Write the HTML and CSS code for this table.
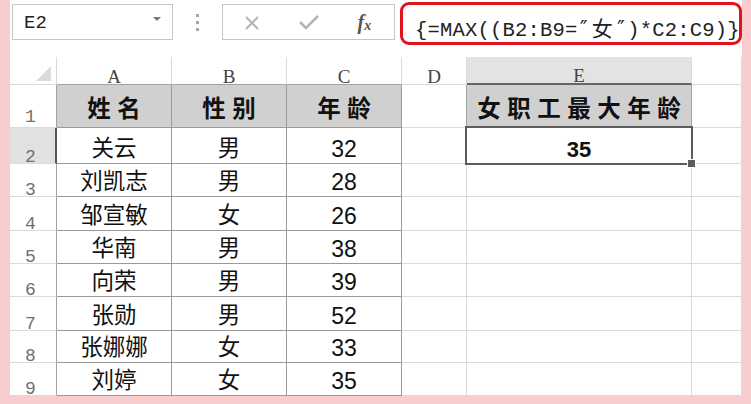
FILE: index.html
```html
<!DOCTYPE html>
<html lang="zh-CN">
<head>
<meta charset="utf-8">
<title>Excel</title>
<link rel="stylesheet" href="styles.css">
</head>
<body>
<div class="frame">
  <div class="toolbar">
    <div class="namebox"><span class="nb-text">E2</span><span class="nb-arrow"></span></div>
    <div class="dots"><i></i><i></i><i></i></div>
    <div class="fbtns">
      <svg class="ic-x" width="16" height="14" viewBox="0 0 16 14"><path d="M2 1 L14 13 M14 1 L2 13" stroke="#b4b4b4" stroke-width="2" fill="none"/></svg>
      <svg class="ic-ok" width="22" height="16" viewBox="0 0 22 16"><path d="M2 8 L8 14 L20 2" stroke="#b4b4b4" stroke-width="2.6" fill="none"/></svg>
      <span class="fx">f<sub>x</sub></span>
    </div>
    <div class="formula">{=MAX((B2:B9=<span class="q">″</span><span class="cjk">女</span><span class="q">″</span>)*C2:C9)}</div>
  </div>
  <div class="sheet">
    <div class="corner"><span class="tri"></span></div>
    <div class="ch tb">A</div><div class="ch tb">B</div><div class="ch tb">C</div><div class="ch">D</div><div class="ch sel">E</div><div class="ch"></div>

    <div class="rh tl r1">1</div>
    <div class="c t h"><span class="hd">姓名</span></div><div class="c t h"><span class="hd">性别</span></div><div class="c t h"><span class="hd">年龄</span></div>
    <div class="c d1"></div><div class="c e1 h"><span class="hd">女职工最大年龄</span></div><div class="c"></div>

    <div class="rh rsel">2</div>
    <div class="c t">关云</div><div class="c t">男</div><div class="c t n">32</div>
    <div class="c"></div><div class="c e2"><b>35</b></div><div class="c"></div>

    <div class="rh tl">3</div>
    <div class="c t">刘凯志</div><div class="c t">男</div><div class="c t n">28</div>
    <div class="c"></div><div class="c"></div><div class="c"></div>

    <div class="rh tl">4</div>
    <div class="c t">邹宣敏</div><div class="c t">女</div><div class="c t n">26</div>
    <div class="c"></div><div class="c"></div><div class="c"></div>

    <div class="rh tl">5</div>
    <div class="c t">华南</div><div class="c t">男</div><div class="c t n">38</div>
    <div class="c"></div><div class="c"></div><div class="c"></div>

    <div class="rh tl">6</div>
    <div class="c t">向荣</div><div class="c t">男</div><div class="c t n">39</div>
    <div class="c"></div><div class="c"></div><div class="c"></div>

    <div class="rh tl">7</div>
    <div class="c t">张勋</div><div class="c t">男</div><div class="c t n">52</div>
    <div class="c"></div><div class="c"></div><div class="c"></div>

    <div class="rh tl">8</div>
    <div class="c t">张娜娜</div><div class="c t">女</div><div class="c t n">33</div>
    <div class="c"></div><div class="c"></div><div class="c"></div>

    <div class="rh tl">9</div>
    <div class="c t">刘婷</div><div class="c t">女</div><div class="c t n">35</div>
    <div class="c"></div><div class="c"></div><div class="c"></div>
  </div>
</div>
</body>
</html>
```

FILE: styles.css
```css
* { box-sizing: border-box; }
html, body { margin: 0; padding: 0; }
body {
  background: #f9cdcd;
  width: 751px;
  height: 404px;
  overflow: hidden;
  font-family: "Noto Sans CJK SC", sans-serif;
  color: #111;
}
.frame {
  margin-left: 10px;
  width: 732px;
  height: 395px;
  background: #fff;
}
.toolbar {
  height: 57px;
  display: flex;
  align-items: flex-start;
}
.namebox {
  margin: 4px 0 0 2px;
  width: 161px;
  height: 36px;
  border: 1px solid #c6c6c6;
  display: flex;
  align-items: center;
  justify-content: space-between;
  padding: 0 11px 0 11px;
}
.nb-text {
  font-family: "Liberation Mono", monospace;
  font-size: 19px;
  color: #222;
  padding-top: 2px;
}
.nb-arrow {
  width: 0; height: 0;
  border-left: 4px solid transparent;
  border-right: 4px solid transparent;
  border-top: 4px solid #777;
  margin-top: -6px;
}
.dots {
  margin: 14px 0 0 23px;
  width: 3px;
  display: flex;
  flex-direction: column;
  gap: 4px;
}
.dots i {
  display: block;
  width: 3px; height: 3px;
  background: #a8a8a8;
}
.fbtns {
  margin: 4px 0 0 23px;
  width: 174px;
  height: 36px;
  border: 1px solid #c6c6c6;
  display: flex;
  align-items: center;
  padding-left: 21px;
}
.ic-x { margin-top: 2px; }
.ic-ok { margin-left: 38px; }
.fx {
  margin-left: 38px;
  font-family: "Liberation Serif", serif;
  font-style: italic;
  font-weight: bold;
  font-size: 20px;
  color: #555;
}
.fx sub { font-size: 14px; vertical-align: -1px; }
.formula {
  margin: 2px 0 0 5px;
  width: 342px;
  height: 43px;
  flex: none;
  border: 3px solid #e0141c;
  border-radius: 9px;
  font-family: "Liberation Mono", monospace;
  font-size: 20.5px;
  color: #222;
  padding: 7px 0 0 12px;
  white-space: nowrap;
  background: #fff;
  letter-spacing: 0.2px;
}
.formula .cjk {
  font-family: "Noto Sans CJK SC", sans-serif;
  display: inline-block;
  width: 24.6px;
  text-align: center;
  font-size: 21px;
}
.formula .q { font-family: "DejaVu Sans Mono", monospace; }

.sheet {
  display: grid;
  grid-template-columns: 47px 115px 115px 115px 65px 225px 50px;
  grid-template-rows: 28px 43px 36px 33px 34px 33px 33px 34px 32px 33px;
}
.sheet > div {
  border-right: 1px solid #dadada;
  border-bottom: 1px solid #dadada;
  display: flex;
  align-items: flex-end;
  justify-content: center;
}
.corner { position: relative; }
.tri {
  position: absolute;
  right: 5px; bottom: 3px;
  width: 0; height: 0;
  border-left: 15px solid transparent;
  border-bottom: 15px solid #dcdcdc;
}
.ch {
  font-family: "Liberation Serif", serif;
  font-size: 19px;
  line-height: 14px;
  color: #444;
  padding-bottom: 0;
}
.sheet > .ch.tb { border-bottom-color: #a3a3a3; }
.sheet > .ch.sel {
  background: #e3e3e3;
  border-bottom: 2px solid #666;
}
.rh {
  font-family: "Liberation Mono", monospace;
  font-size: 18px;
  line-height: 12px;
  color: #707070;
  padding-bottom: 0;
}
.sheet > .rh { justify-content: flex-start; padding-left: 15px; }
.sheet > .rh.r1 { padding-bottom: 4px; }
.sheet > .rh.tl { border-right-color: #a3a3a3; }
.sheet > .rh.rsel {
  background: #e1e1e1;
  border-right: 2px solid #555;
}
.c {
  font-size: 22.5px;
  padding-bottom: 2px;
  line-height: 1.3;
}
.sheet > .c.t {
  border-right-color: #9a9a9a;
  border-bottom-color: #9a9a9a;
}
.c.n {
  font-family: "Liberation Sans", sans-serif;
  font-size: 23px;
  line-height: 1;
  padding-bottom: 2px;
}
.h {
  background: #d0d0d0;
  padding-bottom: 4px;
}
.hd {
  font-weight: 700;
  font-size: 23.5px;
  letter-spacing: 6.5px;
  margin-right: -6.5px;
}
.sheet > .d1 { border-right-color: #a3a3a3; }
.sheet > .e1 {
  border-right-color: #a3a3a3;
  border-bottom-color: #a3a3a3;
}
.e2 {
  position: relative;
  font-family: "Liberation Sans", sans-serif;
}
.sheet > .e2 { padding-bottom: 2px; }
.e2 b { display: block; font-size: 22px; line-height: 1; }
.e2::after {
  content: "";
  position: absolute;
  left: -2px; top: -2px; right: -2px; bottom: -2px;
  border: 2px solid #5c5c5c;
}
.e2::before {
  content: "";
  position: absolute;
  right: -5px; bottom: -5px;
  width: 7px; height: 7px;
  background: #5c5c5c;
  border: 1px solid #fff;
  z-index: 2;
}
```
